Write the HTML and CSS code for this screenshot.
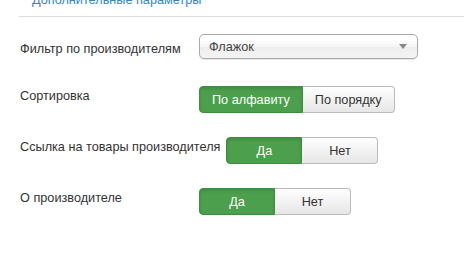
FILE: index.html
```html
<!DOCTYPE html>
<html lang="ru">
<head>
  <meta charset="UTF-8">
  <title>Дополнительные параметры</title>
  <link rel="stylesheet" href="styles.css">
</head>
<body>
  <div class="tabs">
    <a class="tab-link" href="#">Дополнительные параметры</a>
  </div>

  <div class="form">
    <div class="row row-select">
      <label class="label">Фильтр по производителям</label>
      <div class="select">
        <span>Флажок</span>
        <span class="arrow"></span>
      </div>
    </div>

    <div class="row">
      <label class="label">Сортировка</label>
      <div class="btn-group">
        <button class="btn active">По алфавиту</button>
        <button class="btn">По порядку</button>
      </div>
    </div>

    <div class="row">
      <label class="label">Ссылка на товары производителя</label>
      <div class="btn-group">
        <button class="btn yesno active">Да</button>
        <button class="btn yesno">Нет</button>
      </div>
    </div>

    <div class="row">
      <label class="label">О производителе</label>
      <div class="btn-group">
        <button class="btn yesno active">Да</button>
        <button class="btn yesno">Нет</button>
      </div>
    </div>
  </div>
</body>
</html>
```

FILE: styles.css
```css
body {
  margin: 0;
  font-family: "Liberation Sans", Arial, sans-serif;
  font-size: 12.7px;
  line-height: 18px;
  color: #333;
  background: #fff;
}
.tabs {
  margin: -9px 0 0 19px;
  padding: 0 0 7px 13px;
  border-bottom: 1px solid #ddd;
}
.tab-link {
  color: #2f86d0;
  text-decoration: none;
}
.form {
  display: flex;
  flex-direction: column;
  gap: 24px;
  padding: 17px 0 0 20px;
}
.row {
  display: flex;
  align-items: flex-start;
  height: 27px;
}
.row-select {
  height: 28px;
}
.label {
  flex-shrink: 0;
  min-width: 179px;
  padding: 1px 6px 0 0;
  box-sizing: border-box;
}
.row-select .label {
  padding-top: 6px;
}
.select {
  width: 219px;
  height: 25px;
  box-sizing: border-box;
  display: flex;
  align-items: center;
  justify-content: space-between;
  padding: 0 10px 0 9px;
  border: 1px solid #aaa;
  border-radius: 5px;
  background: linear-gradient(#fff 20%, #f6f6f6 50%, #eee 52%, #f4f4f4);
  box-shadow: 0 1px 1px rgba(0, 0, 0, 0.1);
  color: #444;
}
.arrow {
  width: 0;
  height: 0;
  border-left: 4px solid transparent;
  border-right: 4px solid transparent;
  border-top: 5px solid #888;
}
.btn-group {
  display: flex;
}
.btn {
  height: 27px;
  padding: 0 12px;
  font-family: inherit;
  font-size: 12.7px;
  color: #333;
  border: 1px solid #bbb;
  background: linear-gradient(#fff, #e6e6e6);
  cursor: pointer;
}
.btn:first-child {
  border-radius: 4px 0 0 4px;
}
.btn:last-child {
  border-radius: 0 4px 4px 0;
  border-left: 0;
}
.btn.active {
  color: #fff;
  background: #4c9f4c;
  border-color: #3f8e3f;
  box-shadow: inset 0 2px 3px rgba(0, 0, 0, 0.12);
}
.yesno {
  width: 76px;
}
```
